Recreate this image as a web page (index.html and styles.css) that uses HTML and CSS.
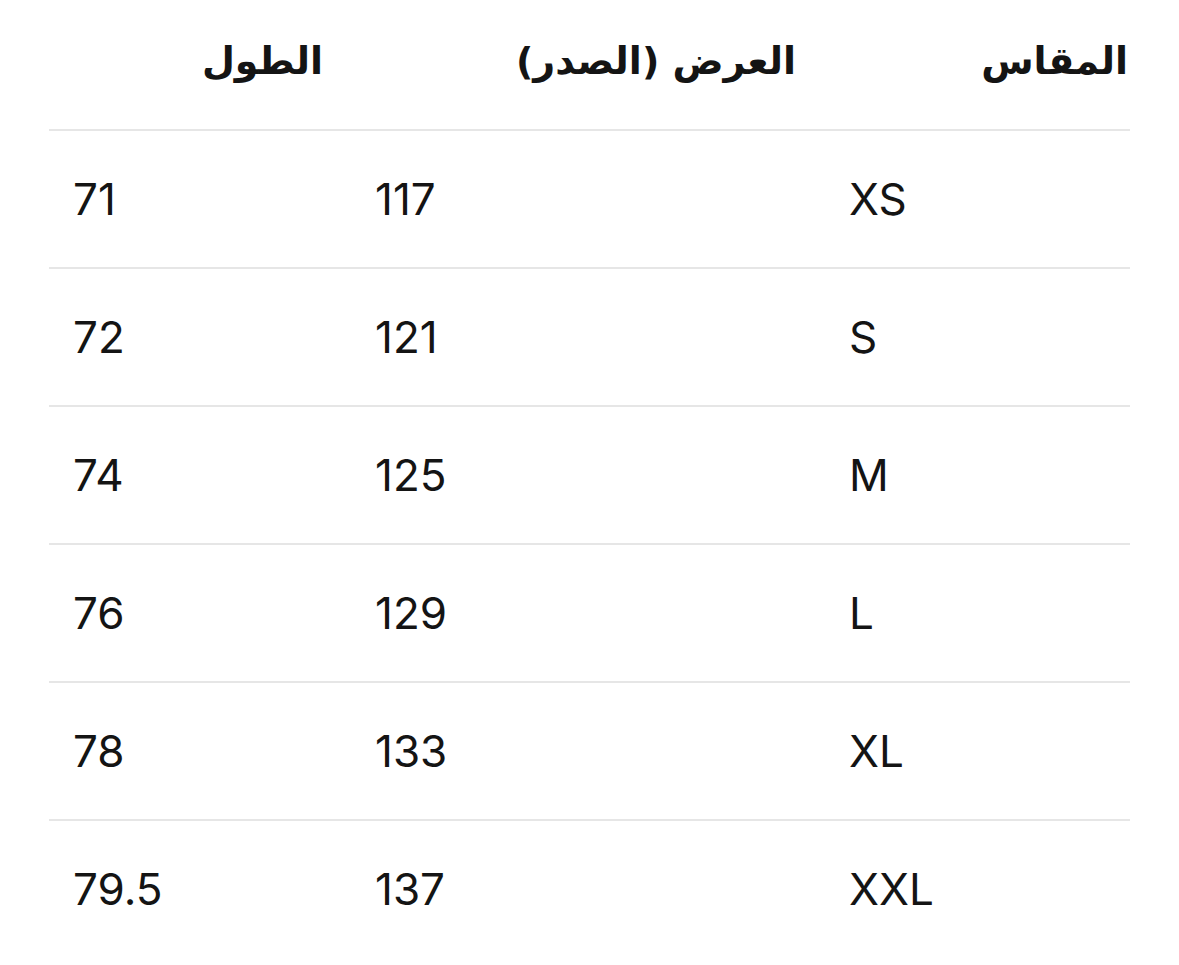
FILE: index.html
```html
<!DOCTYPE html>
<html lang="ar" dir="rtl">
<head>
<meta charset="utf-8">
<title>جدول المقاسات</title>
<link rel="stylesheet" href="styles.css">
</head>
<body>
<div class="table">
  <div class="row head">
    <div class="cell c1">المقاس</div>
    <div class="cell c2">العرض (الصدر)</div>
    <div class="cell c3">الطول</div>
  </div>
  <div class="row"><div class="cell">XS</div><div class="cell">117</div><div class="cell">71</div></div>
  <div class="row"><div class="cell">S</div><div class="cell">121</div><div class="cell">72</div></div>
  <div class="row"><div class="cell">M</div><div class="cell">125</div><div class="cell">74</div></div>
  <div class="row"><div class="cell">L</div><div class="cell">129</div><div class="cell">76</div></div>
  <div class="row"><div class="cell">XL</div><div class="cell">133</div><div class="cell">78</div></div>
  <div class="row last"><div class="cell">XXL</div><div class="cell">137</div><div class="cell">79.5</div></div>
</div>
</body>
</html>
```
FILE: styles.css
```css
html, body {
  margin: 0;
  padding: 0;
  background: #ffffff;
}
body {
  font-family: Inter, "DejaVu Sans", sans-serif;
  color: #141414;
}
.table {
  width: 1081px;
  margin-right: 49px;
  margin-left: 49px;
}
.row {
  display: grid;
  grid-template-columns: 305px 474px 302px;
  height: 136px;
  border-bottom: 2px solid #e6e6e6;
  align-items: center;
}
.row.last {
  border-bottom: none;
}
.row .cell {
  direction: ltr;
  text-align: left;
  padding-left: 24px;
  font-size: 44px;
  font-weight: 400;
  line-height: 1;
}
.row.head {
  height: 129px;
}
.row.head .cell {
  direction: rtl;
  text-align: right;
  padding-left: 0;
  font-family: "DejaVu Sans", sans-serif;
  font-weight: bold;
  font-size: 38px;
  align-self: start;
  padding-top: 42px;
}
.row.head .c1 { padding-right: 2px; }
.row.head .c2 { padding-right: 29px; }
.row.head .c3 { padding-right: 28px; }
```
